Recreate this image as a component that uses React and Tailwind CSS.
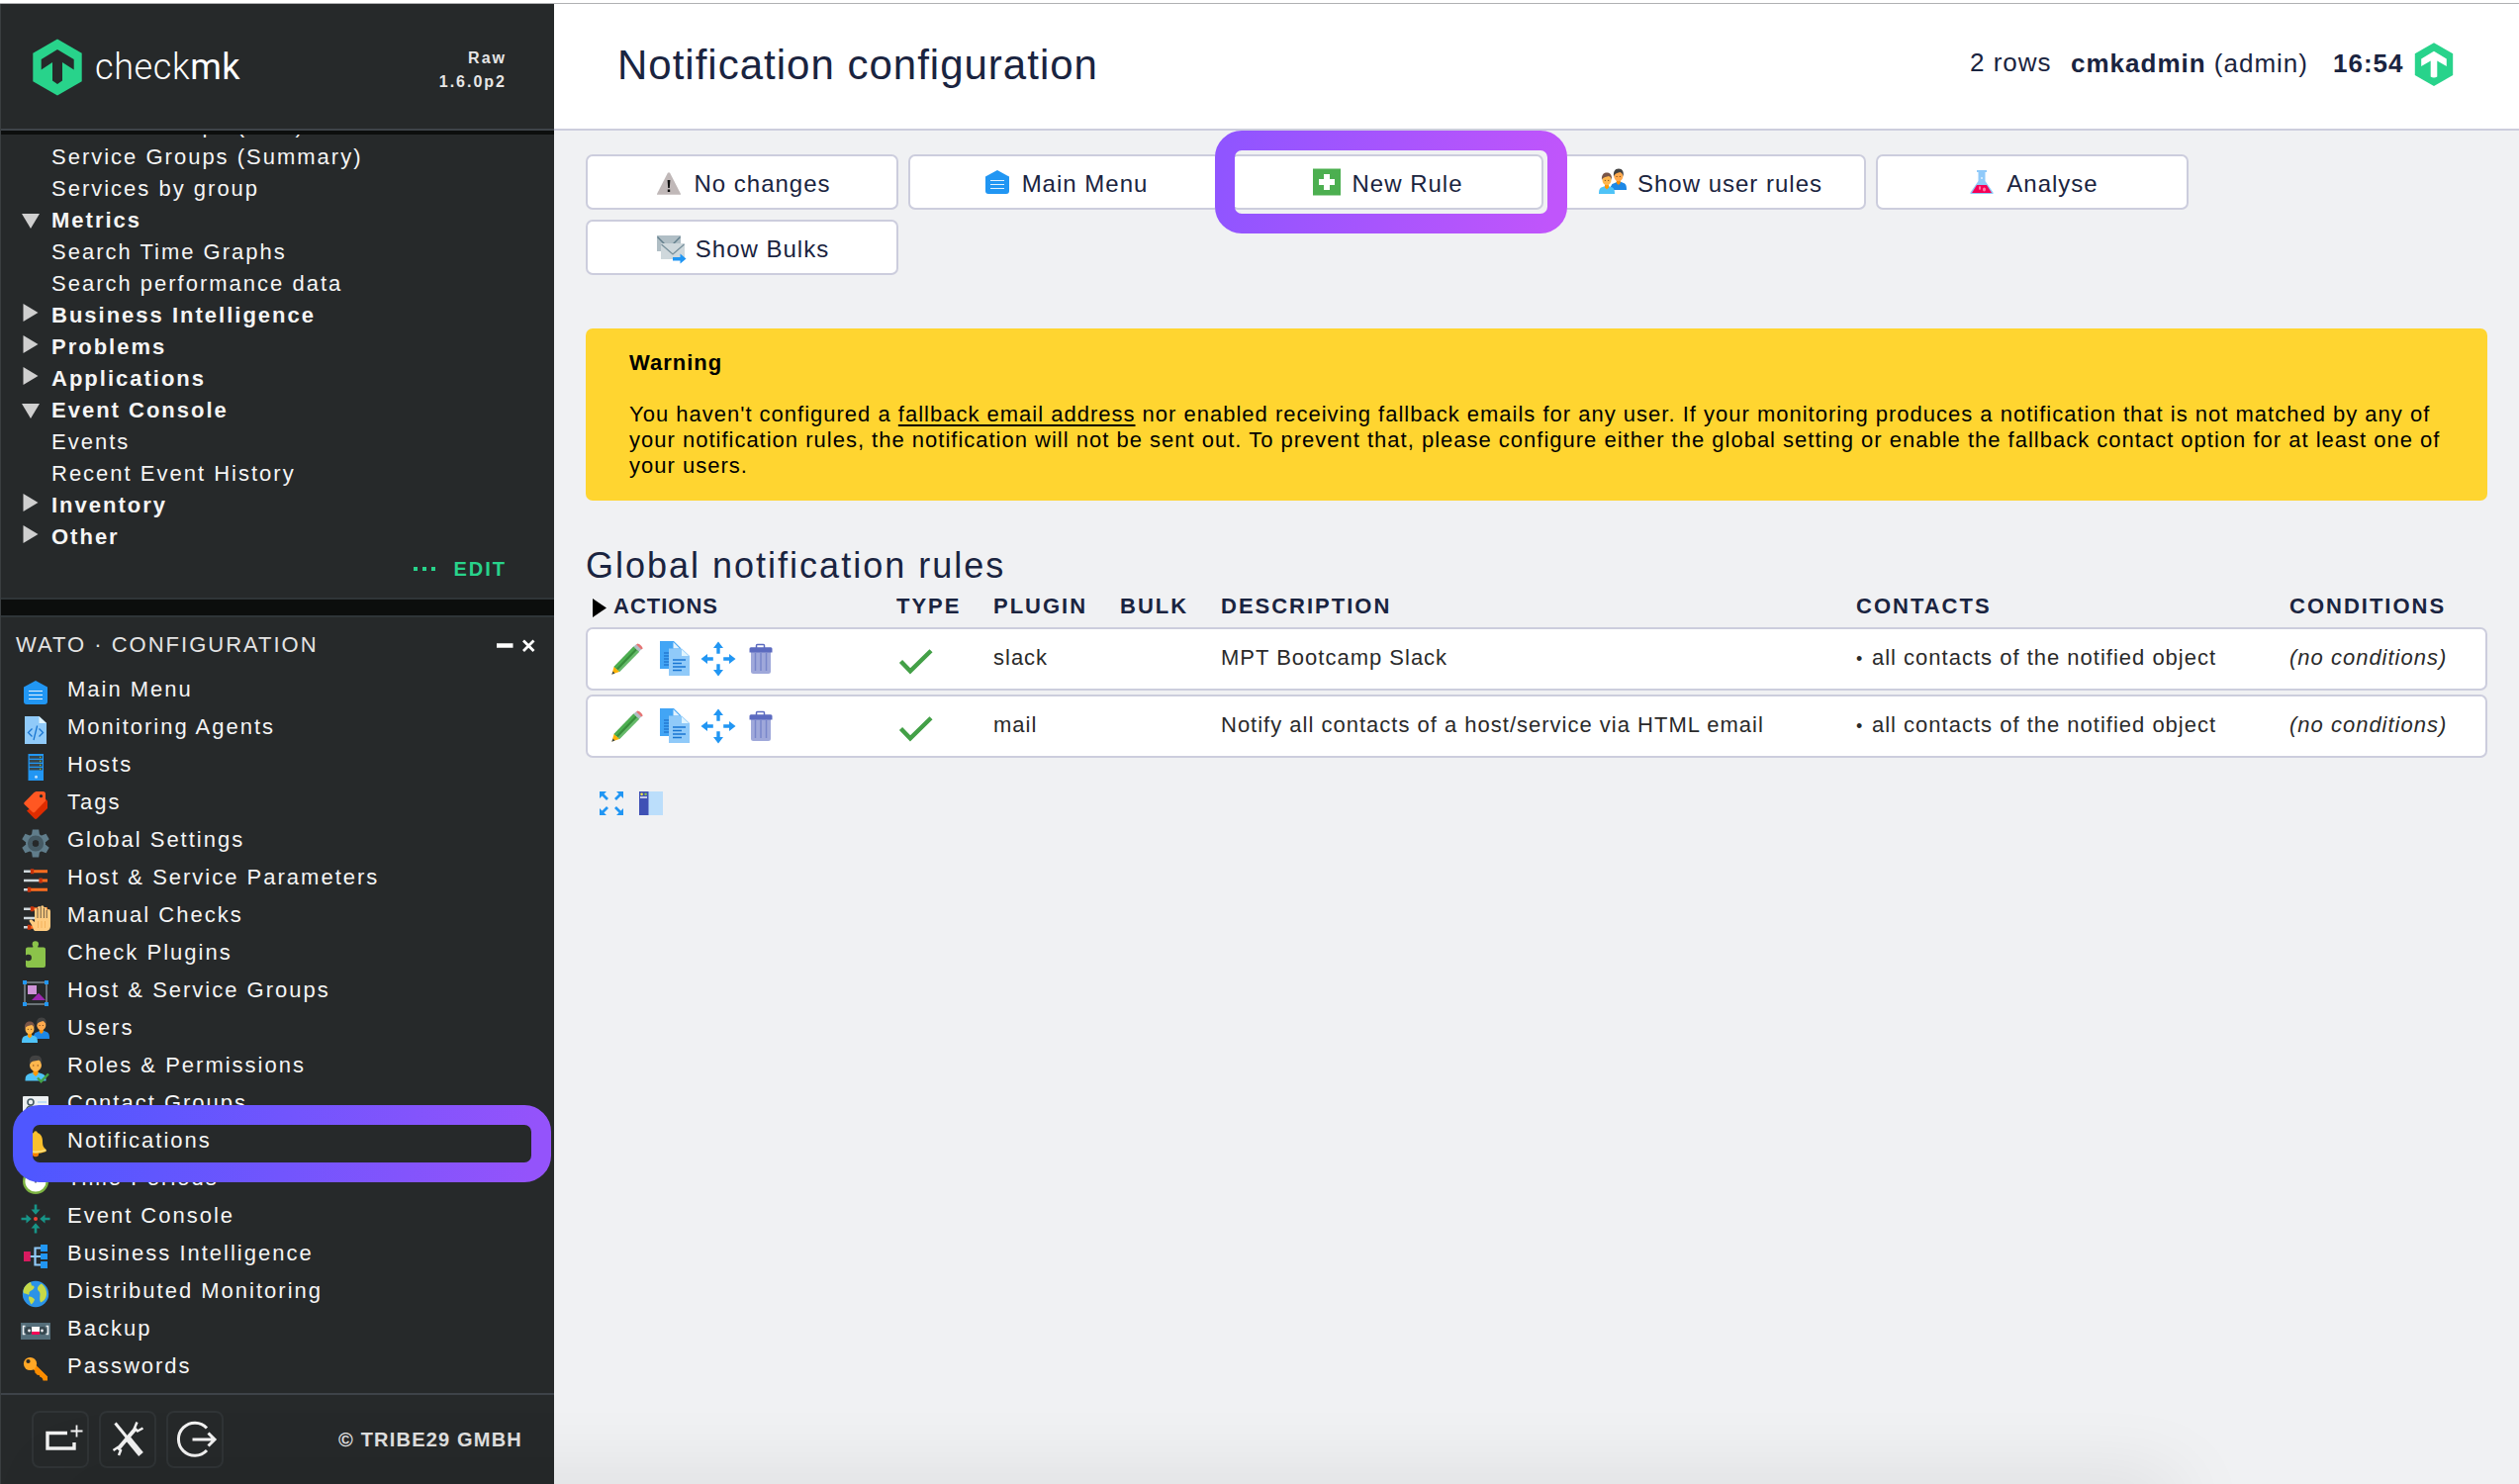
import React from "react";

/* ---------- generic icon frame ---------- */
function Icon({ children, className = "size-7" }) {
  return (
    <svg viewBox="0 0 28 28" fill="none" className={`shrink-0 overflow-visible ${className}`}>
      {children}
    </svg>
  );
}

/* ---------- sidebar / toolbar icons ---------- */
const HouseIcon = () => (
  <Icon>
    <path d="M14 2 26 8.6V23a3 3 0 0 1-3 3H5a3 3 0 0 1-3-3V8.6Z" fill="#2196f3" />
    <path d="M7 12.5H21M7 16.5H21M7 20.5H21" stroke="#e3f2fd" strokeWidth="1.2" />
  </Icon>
);
const AgentIcon = () => (
  <Icon>
    <path d="M3 0H17.5L25 7V28H3Z" fill="#90caf9" />
    <path d="M17.5 0 25 7H17.5Z" fill="#e1f5fe" />
    <path d="M10.5 12.5 6.5 16.5 10.5 20.500M17.500 12.500 21.500 16.500 17.500 20.500M15.600 9.500 12 24" stroke="#1976d2" strokeWidth="1.300" />
  </Icon>
);
const HostIcon = () => (
  <Icon>
    <path d="M6.500 0H22V27H6.500Z" fill="#2196f3" />
    <path d="M7.800 2H20.800V4.800H7.800ZM7.800 6H20.800V8.800H7.800ZM7.800 10H20.800V12.800H7.800ZM7.800 14H20.800V16.500H7.800Z" fill="#37474f" />
    <path d="M18 2.800h1.200v1.200H18ZM18 6.800h1.200v1.200H18ZM18 10.800h1.200v1.200H18ZM18 14.700h1.200v1.200H18Z" fill="#8bc34a" />
    <circle cx="14.500" cy="23.300" r="1.500" fill="#bbdefb" />
  </Icon>
);
const TagIcon = () => (
  <Icon>
    <path d="M23 6.500 26 9.500V17L15.500 27.300a2 2 0 0 1-2.800 0L5 19.500Z" fill="#dd2c00" />
    <path d="M14.500 0H21.500a2.500 2.500 0 0 1 2.500 2.500V9.500L13 21a1.500 1.500 0 0 1-2 0L2.600 13a1.500 1.500 0 0 1 0-2L12.500 1Z" fill="#ff5722" />
    <circle cx="19.500" cy="4.700" r="1.600" fill="#26292a" />
  </Icon>
);
const GearIcon = () => (
  <Icon>
    <g fill="#607d8b">
      <circle cx="14" cy="14.500" r="10" />
      <path d="M10.800 .5H17.200L18 6H10ZM10.800 28.500H17.200L18 23H10Z" />
      <path d="M10.800 .5H17.200L18 6H10ZM10.800 28.500H17.200L18 23H10Z" transform="rotate(60 14 14.500)" />
      <path d="M10.800 .5H17.200L18 6H10ZM10.800 28.500H17.200L18 23H10Z" transform="rotate(120 14 14.500)" />
    </g>
    <circle cx="14" cy="14.500" r="5.600" fill="#26292a" stroke="#455a64" strokeWidth="5" />
    <circle cx="14" cy="14.500" r="3.200" fill="#26292a" />
  </Icon>
);
const SliderLines = () => (
  <>
    <path d="M2 4.700H10M2 14H19M2 23.300H7" stroke="#cfd8dc" strokeWidth="2.400" />
    <path d="M10 4.700H26M19 14H26M7 23.300H26" stroke="#ff6d1f" strokeWidth="3" />
    <path d="M8.800 2.200h3.400v5H8.800ZM17.400 11.500h3.400v5h-3.400ZM5.800 20.800h3.400v5H5.800Z" fill="#c8330c" />
  </>
);
const ParamsIcon = () => (
  <Icon>
    <SliderLines />
  </Icon>
);
const ManualIcon = () => (
  <Icon>
    <SliderLines />
    <path d="M12 26C11 22 9.500 20 7.800 17.500c-.7-1.500 1-2.600 2.300-1.700L13 18V5.500a1.500 1.500 0 0 1 3 0V3.500a1.500 1.500 0 0 1 3.200 0V2.800a1.500 1.500 0 0 1 3.200 0V4.500a1.400 1.400 0 0 1 2.800 0V7a1.300 1.300 0 0 1 3.800 0V22c0 3-2 5-5 5H16c-2 0-3.500 0-4-1Z" fill="#ffcc80" />
    <path d="M16 4V14M19.200 3V14M22.400 4V14M25.200 6V14" stroke="#26292a" strokeWidth=".7" />
    <path d="M16.500 17V24M20 17V24M23.500 17V24" stroke="#f5b35c" strokeWidth="1" />
  </Icon>
);
const PuzzleIcon = () => (
  <Icon>
    <path d="M6 5.500h5.200c.6-1-.6-1.700-.6-3a3.200 3.200 0 0 1 6.400 0c0 1.300-1.200 2-.6 3H22a2 2 0 0 1 2 2V24a2 2 0 0 1-2 2H6a2 2 0 0 1-2-2V18.700c1 0 1.400.6 2.600.6a3.300 3.300 0 0 0 0-6.600c-1.200 0-1.600.7-2.600.7V7.500a2 2 0 0 1 2-2Z" fill="#8bc34a" />
  </Icon>
);
const GroupIcon = () => (
  <Icon>
    <rect x="3" y="3" width="22" height="22" stroke="#b0bec5" strokeWidth="1" />
    <path d="M1 1H5V5H1ZM23 1H27V5H23ZM1 23H5V27H1ZM23 23H27V27H23Z" fill="#2196f3" />
    <path d="M6 6H15V15H6Z" fill="#ce93d8" />
    <path d="M17 13.700 24 21H10Z" fill="#9c27b0" />
  </Icon>
);
const UsersIcon = () => (
  <Icon>
    <path d="M12 22V18.500a5 5 0 0 1 4-3.500l3-1.500h2.500l3.500 1.500c2 .8 3 2 3 7Z" fill="#1e88e5" />
    <path d="M17.800 11h4v4l-2 2-2-2Z" fill="#fb8c00" />
    <ellipse cx="19.800" cy="8" rx="4.600" ry="5.200" fill="#ffa94d" />
    <path d="M15 8.500C14.500 3.500 16 .5 20 .5s5.300 3 4.800 8C24 5.500 22.500 4.500 21.500 4c-2 1-5 .5-6.500 4.500Z" fill="#424242" />
    <path d="M0 26C0 21.500 1 20 3 19.300L6.500 18h3l3.500 1.300c2 .7 3 2.200 3 6.700Z" fill="#4fc3f7" />
    <path d="M6 15.500h4v4l-2 2-2-2Z" fill="#ff9800" />
    <ellipse cx="8" cy="12" rx="4.500" ry="5.200" fill="#ffb74d" />
    <path d="M3 12C2.500 7 4.500 4.500 8 4.500s5.500 2.500 5 7.500C12.500 9.500 11 8.500 10 8 8 9 4.500 8.500 3 12Z" fill="#795548" />
    <path d="M5.800 12.400h1.200M9 12.400h1.200M17.500 8.500h1.200M20.800 8.500h1.200" stroke="#784719" strokeWidth=".9" />
  </Icon>
);
const RoleIcon = () => (
  <Icon>
    <path d="M3.500 26.500C3.500 22 4.500 20.500 7 19.500L11.500 18h5l4.500 1.500c2.500 1 3.500 2.500 3.500 7Z" fill="#4fc3f7" />
    <path d="M11.500 14.500h5v5L14 22l-2.500-2.500Z" fill="#ff9800" />
    <ellipse cx="14" cy="10.500" rx="6" ry="6.500" fill="#ffb74d" />
    <path d="M8 10C7 3.500 9 .8 14 .8S21 3.500 20 10C19.500 7 18.500 6 17.500 5.500 15.500 6.500 9.500 5.500 8 10Z" fill="#424242" />
    <path d="M11 11h1.400M15.600 11H17" stroke="#784719" strokeWidth="1.200" />
    <path d="M16 23.500 19.500 27.200 27 19.500" stroke="#43a047" strokeWidth="2.400" />
  </Icon>
);
const CardIcon = () => (
  <Icon>
    <rect x="1" y="4" width="26" height="20" rx="1" fill="#eceff1" />
    <circle cx="9" cy="10" r="3" fill="#eceff1" stroke="#455a64" strokeWidth="1.600" />
    <path d="M4.500 20c0-4 2-6 4.500-6s4.500 2 4.500 6" stroke="#455a64" strokeWidth="1.500" />
    <path d="M16 10H25M16 13.500H25M16 17H25" stroke="#90caf9" strokeWidth="1.200" />
  </Icon>
);
const BellIcon = () => (
  <Icon>
    <circle cx="14" cy="24" r="3.200" fill="#f57c00" />
    <path d="M14 1.200c1.200 0 1.800.8 1.800 1.800 3.800 1.300 5.200 4.500 5.200 8.500 0 5 1 6 3.500 8.500v2c-7 2.500-14 2.500-21 0v-2c2.500-2.500 3.500-3.500 3.500-8.500 0-4 1.400-7.200 5.200-8.500 0-1 .6-1.800 1.800-1.800Z" fill="#fbc02d" />
    <path d="M3.500 20.500c7 2.300 14 2.300 21 0" stroke="#ffe082" strokeWidth="1.500" />
  </Icon>
);
const ClockIcon = () => (
  <Icon>
    <circle cx="14" cy="14" r="11.800" fill="#fff" stroke="#7cb342" strokeWidth="2.400" />
    <path d="M14 6V15.500" stroke="#37474f" strokeWidth="1.600" />
  </Icon>
);
const InArrow = ({ angle }) => (
  <path d="M12.700 -.5H15.300V4.500H18.500L14 9.800 9.500 4.500H12.700Z" fill="#179487" transform={`rotate(${angle} 14 14)`} />
);
const EventIcon = () => (
  <Icon>
    <InArrow angle={0} />
    <InArrow angle={90} />
    <InArrow angle={180} />
    <InArrow angle={270} />
    <circle cx="14" cy="14" r="2" fill="#f44336" />
  </Icon>
);
const BiIcon = () => (
  <Icon>
    <path d="M20 5.500H13.500V22.500H20M8 14H20" stroke="#90caf9" strokeWidth="2.200" />
    <path d="M2 9H8.800V19H2Z" fill="#d81b60" />
    <path d="M19 2H26V9H19ZM19 11H26V17H19ZM19 19H26V26H19Z" fill="#2196f3" />
  </Icon>
);
const GlobeIcon = () => (
  <Icon>
    <circle cx="14" cy="14" r="13.200" fill="#2b93e8" />
    <path d="M9 2C4 4 1.500 8 1.500 12c1.500 3 3 1 4.500 2.500 1 1 2-.5 1.500-2 1-2 3-2 4.500-4C13.500 7 12 5 10 5.500Z" fill="#c6d947" />
    <path d="M7 16.500c2-.5 5 1 6 3-.5 2-2 4-3.500 5C8 22 6.500 19 7 16.500Z" fill="#c6d947" />
    <path d="M20 3.500C17 5 15.500 7 16 9.500c1 2 2.500 2 2.500 4.500 0 3-1 5.500.5 8.500 3-1 4.500-3 5.500-5.500 1.500-4.500 0-10-4.500-13.500Z" fill="#c6d947" />
  </Icon>
);
const TapeIcon = () => (
  <Icon>
    <path d="M-1 5H29V22H-1Z" fill="#546e7a" />
    <path d="M3.500 8.500h-2v8h2M24.500 8.500h2v8h-2" stroke="#eceff1" strokeWidth="1.500" />
    <circle cx="7" cy="13" r="4" fill="#37474f" />
    <circle cx="21" cy="13" r="4" fill="#37474f" />
    <circle cx="7.500" cy="13" r="1.400" fill="#eceff1" />
    <circle cx="20.500" cy="13" r="1.400" fill="#eceff1" />
    <path d="M10 9H18V14H10Z" fill="#fafafa" />
    <path d="M10 14H18V17H10Z" fill="#f50057" />
  </Icon>
);
const KeyIcon = () => (
  <Icon>
    <path d="M11 10 24.500 23.500" stroke="#fb8c00" strokeWidth="5" />
    <path d="M13 17 16 20 18 19.500 18.500 22 20.800 22 21.500 25.500H26V21.500L16 12Z" fill="#fb8c00" />
    <circle cx="8.500" cy="8.500" r="6.600" fill="#ffa726" />
    <circle cx="6.500" cy="6" r="2.100" fill="#26292a" />
  </Icon>
);
const WarnIcon = () => (
  <Icon>
    <path d="M13 4.500h2L26 26v.8H2V26Z" fill="#c0b8b8" />
    <path d="M12.600 12h2.800l-.6 8h-1.600ZM12.800 21.500h2.400v2.400h-2.400Z" fill="#111" />
  </Icon>
);
const PlusIcon = () => (
  <Icon>
    <path d="M0 .5H28V27.500H0Z" fill="#4caf50" />
    <path d="M11 6H17V11H22V17H17V22H11V17H6V11H11Z" fill="#fff" />
  </Icon>
);
const FlaskIcon = () => (
  <Icon>
    <path d="M9 2H19V4H17.500V13L25.500 24.500V26H2.500V24.500L10.500 13V4H9Z" fill="#90caf9" />
    <path d="M9 17H19L24 25H4Z" fill="#f50057" />
    <ellipse cx="12" cy="20" rx="1" ry="2" fill="#ff80ab" />
    <ellipse cx="16.500" cy="21.500" rx="1.500" ry="2" fill="#ff80ab" />
    <circle cx="14" cy="10" r="1" fill="#e3f2fd" />
  </Icon>
);
const BulkIcon = () => (
  <Icon>
    <path d="M0 2H24V18H0Z" fill="#b0bec5" />
    <path d="M.5 3.500 12 15 23.500 3.500" stroke="#607d8b" strokeWidth="1.400" />
    <path d="M4 10H28V26H4Z" fill="#cfd8dc" />
    <path d="M4.500 11 16 21 27.500 11" stroke="#78909c" strokeWidth="1.300" />
    <path d="M16 24H23.500V20.500L29.500 25.500 23.500 30.500V27.500H16Z" fill="#2196f3" />
  </Icon>
);

/* ---------- table icons ---------- */
const PencilIcon = () => (
  <svg viewBox="0 0 32 32" className="size-8 shrink-0">
    <path d="M22.500 3.500 28 8.700 8 29 2.500 24Z" fill="#388e3c" />
    <path d="M22.500 3.500 24.500 5.500 4.600 26 2.500 24Z" fill="#4caf50" />
    <path d="M26 7 28 8.700 8 29 6.300 27.500Z" fill="#66bb6a" />
    <path d="M2.500 24 8 29 .5 31.500Z" fill="#ffb300" />
    <path d="M1.500 28.500 3.500 30.500 .3 31.700Z" fill="#37474f" />
    <path d="M22.500 3.500 25 1.200 30.300 6.300 28 8.700Z" fill="#b0bec5" />
    <path d="M25 1.500 26.500.4c1.500 0 5 3 5.200 5L30.200 6.500Z" fill="#e57373" />
  </svg>
);
const CopyIcon = () => (
  <svg viewBox="0 0 30 36" className="h-9 w-[30px] shrink-0">
    <path d="M0 0H14L21 7V28H0Z" fill="#42a5f5" />
    <path d="M13.500 1 20 7.500H13.500Z" fill="#e3f2fd" />
    <path d="M4 12H10M4 15H10M4 18H10M4 21H10M4 24H10" stroke="#1565c0" strokeWidth="1.200" />
    <path d="M9 7.500H22L30 15V35H9Z" fill="#90caf9" />
    <path d="M22 8.500 29 15H22Z" fill="#e1f5fe" />
    <path d="M13 19H26M13 22.500H22M13 26H26M13 29.500H22" stroke="#1976d2" strokeWidth="1.400" />
  </svg>
);
const OutArrow = ({ angle }) => (
  <path d="M18 .5 23 7H19.700V12.800H16.300V7H13Z" fill="#2196f3" transform={`rotate(${angle} 18 18)`} />
);
const MoveIcon = () => (
  <svg viewBox="0 0 36 36" className="size-9 shrink-0">
    <OutArrow angle={0} />
    <OutArrow angle={90} />
    <OutArrow angle={180} />
    <OutArrow angle={270} />
  </svg>
);
const TrashIcon = () => (
  <svg viewBox="0 0 24 32" className="h-8 w-6 shrink-0" fill="none">
    <path d="M7.500 5V2.500a1 1 0 0 1 1-1h6a1 1 0 0 1 1 1V5" stroke="#5c6bc0" strokeWidth="1.500" />
    <path d="M2 9H22V28.500a2.500 2.500 0 0 1-2.500 2.500h-15A2.500 2.500 0 0 1 2 28.500Z" fill="#9fa8da" />
    <path d="M6.500 10V28M12 10V28M17.500 10V28" stroke="#7986cb" strokeWidth="1.500" />
    <path d="M2 4.200H22a1.500 1.500 0 0 1 1.500 1.500V9.500H.5V5.700A1.500 1.500 0 0 1 2 4.200Z" fill="#5c6bc0" />
  </svg>
);
const CheckIcon = () => (
  <svg viewBox="0 0 36 26" className="h-[26px] w-9" fill="none">
    <path d="M2.500 12.500 12 22.300 33 1.800" stroke="#43a047" strokeWidth="4.400" />
  </svg>
);

/* ---------- brand mark ---------- */
function Brand({ className, inner }) {
  return (
    <svg viewBox="0 0 50 58" className={className}>
      <path d="M25 .5 49.700 14.800V43.200L25 57.500.3 43.200V14.800Z" fill="#28d38b" />
      <path d="M25 11 41.700 21V31.500L30 24V42.500L25 46 20 42.500V24L8.700 31.500V21Z" fill={inner} />
    </svg>
  );
}
function HeaderMark() {
  return (
    <svg viewBox="0 0 40 44" className="h-11 w-10">
      <path d="M20 .3 39.200 11.300V33L20 44 .8 33V11.300Z" fill="#28d38b" />
      <path d="M20 8.700 32.800 16.500V24L23.300 18.500V34.500q-3.300 2.200-6.600 0V18.500L7.200 24V16.500Z" fill="#fff" />
    </svg>
  );
}

/* ---------- data ---------- */
const VIEWS = [
  ["item", "Service Groups (Grid)"],
  ["item", "Service Groups (Summary)"],
  ["item", "Services by group"],
  ["open", "Metrics"],
  ["item", "Search Time Graphs"],
  ["item", "Search performance data"],
  ["closed", "Business Intelligence"],
  ["closed", "Problems"],
  ["closed", "Applications"],
  ["open", "Event Console"],
  ["item", "Events"],
  ["item", "Recent Event History"],
  ["closed", "Inventory"],
  ["closed", "Other"],
];

const WATO = [
  [HouseIcon, "Main Menu"],
  [AgentIcon, "Monitoring Agents"],
  [HostIcon, "Hosts"],
  [TagIcon, "Tags"],
  [GearIcon, "Global Settings"],
  [ParamsIcon, "Host & Service Parameters"],
  [ManualIcon, "Manual Checks"],
  [PuzzleIcon, "Check Plugins"],
  [GroupIcon, "Host & Service Groups"],
  [UsersIcon, "Users"],
  [RoleIcon, "Roles & Permissions"],
  [CardIcon, "Contact Groups"],
  [BellIcon, "Notifications"],
  [ClockIcon, "Time Periods"],
  [EventIcon, "Event Console"],
  [BiIcon, "Business Intelligence"],
  [GlobeIcon, "Distributed Monitoring"],
  [TapeIcon, "Backup"],
  [KeyIcon, "Passwords"],
];

const BUTTONS = [
  [WarnIcon, "No changes"],
  [HouseIcon, "Main Menu"],
  [PlusIcon, "New Rule"],
  [UsersIcon, "Show user rules"],
  [FlaskIcon, "Analyse"],
  [BulkIcon, "Show Bulks"],
];

const RULES = [
  ["slack", "MPT Bootcamp Slack"],
  ["mail", "Notify all contacts of a host/service via HTML email"],
];

/* ---------- sidebar ---------- */
function ViewRow({ kind, label }) {
  return (
    <li className="flex h-8 text-[22px] leading-8 tracking-[2px] text-[#f5f5f5]">
      <span className="flex w-[51px] pl-[22px]">
        {kind === "closed" && (
          <svg viewBox="0 0 16 18" className="mt-1 h-[18px] w-4">
            <path d="M.5 0 15.500 9 .5 18Z" fill="#cfcfcf" />
          </svg>
        )}
        {kind === "open" && (
          <svg viewBox="0 0 18 15" className="-ml-[1px] mt-[9px] h-[15px] w-[18px]">
            <path d="M0 0H18L9 15Z" fill="#cfcfcf" />
          </svg>
        )}
      </span>
      <span className={kind === "item" ? "" : "font-bold"}>{label}</span>
    </li>
  );
}

function FooterButton({ children }) {
  return (
    <div className="size-[58px] rounded-lg border-2 border-[#303436]">
      <svg viewBox="0 0 54 54" fill="none" stroke="#f2f2f2" className="size-[54px]">
        {children}
      </svg>
    </div>
  );
}

function Sidebar() {
  return (
    <aside className="flex w-[560px] shrink-0 flex-col border-l border-[#3a3e40] bg-[#26292a]">
      <div className="flex h-[128px] justify-between border-b-2 border-[#3e4349] pr-12 pl-8">
        <div className="flex pt-[35px]">
          <Brand className="h-[58px] w-[50px]" inner="#26292a" />
          <div className="ml-[13px] pt-2 font-['Roboto'] text-[36px] leading-[42px] font-light tracking-[0.600px] text-white">
            check<span className="font-normal">mk</span>
          </div>
        </div>
        <div className="pt-[43px] text-right text-[16px] leading-6 font-bold tracking-[2px] text-[#e6e6e6]">
          <div>Raw</div>
          <div>1.6.0p2</div>
        </div>
      </div>
      <div className="h-1 bg-[#0c0e0d]" />

      <div className="h-[468px] overflow-hidden">
        <ul className="-mt-[25px]">
          {VIEWS.map(([kind, label]) => (
            <ViewRow key={label} kind={kind} label={label} />
          ))}
        </ul>
        <div className="flex items-center justify-end pt-[1px] pr-12 text-[20px] leading-[30px] font-bold tracking-[2px] text-[#28d38b]">
          <span className="mr-[18px] flex gap-[5px]">
            <i className="size-1 bg-[#28d38b]" />
            <i className="size-1 bg-[#28d38b]" />
            <i className="size-1 bg-[#28d38b]" />
          </span>
          EDIT
        </div>
      </div>
      <div className="h-5 border-y-2 border-[#2f3538] bg-[#0c0e0d]" />

      <div className="flex h-[57px] items-start pt-[15px] pl-[15px] text-[22px] leading-[25px] tracking-[2px] text-[#e4e4e4]">
        <span className="flex-1">WATO · CONFIGURATION</span>
        <svg viewBox="0 0 40 14" stroke="#fff" fill="none" className="mt-[7px] mr-[18px] h-[14px] w-10">
          <path d="M0 6.500H16.500" strokeWidth="4.500" />
          <path d="M27 1.500 37.500 12M37.500 1.500 27 12" strokeWidth="2.800" />
        </svg>
      </div>

      <ul className="h-[727px]">
        {WATO.map(([Glyph, label]) => (
          <li key={label} className="flex h-[38px] pl-[21px] text-[22px] leading-[31px] tracking-[2px] text-[#f5f5f5]">
            <span className="mt-[5px] mr-[18px] size-7">
              <Glyph />
            </span>
            {label}
          </li>
        ))}
      </ul>

      <div className="flex flex-1 border-t-2 border-[#3e4349] pt-4 pl-[31px]">
        <div className="flex gap-[10px]">
          <FooterButton>
            <path d="M34 20.500H14V36H41V30" strokeWidth="3.400" />
            <path d="M43.500 12.500V24.500M37.500 18.500H49.500" strokeWidth="1.800" />
          </FooterButton>
          <FooterButton>
            <path d="M14.500 10.500 28 27" strokeWidth="3" />
            <path d="M26.500 25 40.500 42" strokeWidth="6" />
            <path d="M35 16 17 37" strokeWidth="4" />
            <path d="M36.500 9.500 34 15.500 37 18.500 42.500 15.500M12.500 38 17 35 20 38 18 43" strokeWidth="2.500" />
          </FooterButton>
          <FooterButton>
            <path d="M39 15.500A16.500 16.500 0 1 0 39 38" strokeWidth="3" />
            <path d="M24.500 27H47M40.500 20.500 47 27 40.500 33.500" strokeWidth="3" />
          </FooterButton>
        </div>
        <div className="ml-[116px] pt-4 text-[20px] leading-[26px] font-bold tracking-[1.200px] text-[#e0e0e0]">© TRIBE29 GMBH</div>
      </div>
    </aside>
  );
}

/* ---------- main area ---------- */
function Header() {
  return (
    <header className="flex h-[128px] justify-between border-b-2 border-[#cccddd] bg-white pr-[66px] pl-16 text-[#1a2440]">
      <h1 className="pt-[38px] text-[42px] leading-[48px] tracking-[1px]">Notification configuration</h1>
      <div className="flex items-start text-[26px] leading-[30px] tracking-[1px] whitespace-nowrap">
        <span className="mt-[44px] w-[102px]">2 rows</span>
        <span className="mt-[45px] w-[265px]">
          <b>cmkadmin</b> (admin)
        </span>
        <b className="mt-[45px] w-[82px]">16:54</b>
        <span className="mt-[39px]">
          <HeaderMark />
        </span>
      </div>
    </header>
  );
}

function Rule({ plugin, description }) {
  return (
    <div className="grid h-16 grid-cols-[312px_98px_128px_102px_642px_438px_1fr] rounded-[7px] border-2 border-[#cccddd] bg-white pt-4 text-[22px] leading-[26px] tracking-[1px] whitespace-nowrap text-[#2a2a2a]">
      <div className="-mt-1 flex h-9 items-center pl-6">
        <PencilIcon />
        <span className="ml-[17px]"><CopyIcon /></span>
        <span className="ml-[11px]"><MoveIcon /></span>
        <span className="ml-[13px]"><TrashIcon /></span>
      </div>
      <div className="pt-1 pl-[2px]">
        <CheckIcon />
      </div>
      <div>{plugin}</div>
      <div />
      <div>{description}</div>
      <div><span className="mr-[8px] inline-block w-[8px] text-[18px]">•</span>all contacts of the notified object</div>
      <div className="italic">(no conditions)</div>
    </div>
  );
}

function Main() {
  return (
    <main className="flex-1">
      <Header />
      <div className="px-8 pt-6">
        <div className="flex flex-wrap gap-[10px]">
          {BUTTONS.map(([Glyph, label]) => (
            <button
              key={label}
              className="flex h-14 w-[316px] items-center justify-center gap-[11px] rounded-[7px] border-2 border-[#cccddd] bg-white pl-[2px] text-[24px] leading-[27px] tracking-[1px] text-[#1a2440]"
            >
              <Glyph />
              <span className="pt-[3px]">{label}</span>
            </button>
          ))}
        </div>

        <section className="mt-[54px] h-[174px] rounded-[7px] bg-[#ffd530] pt-[22px] pl-11 text-[22px] leading-[26px] tracking-[1px] whitespace-nowrap text-black">
          <b>Warning</b>
          <p className="mt-[26px]">
            You haven't configured a{" "}
            <a className="underline decoration-2 underline-offset-[3px] [text-decoration-skip-ink:none]">fallback email address</a> nor enabled
            receiving fallback emails for any user. If your monitoring produces a notification that is not matched by any of
            <br />
            your notification rules, the notification will not be sent out. To prevent that, please configure either the global
            setting or enable the fallback contact option for at least one of
            <br />
            your users.
          </p>
        </section>

        <h2 className="mt-[45px] text-[36px] leading-[42px] tracking-[2px] text-[#1a2440]">Global notification rules</h2>
        <div className="grid h-[41px] grid-cols-[314px_98px_128px_102px_642px_438px_1fr] pt-[7px] text-[22px] leading-[26px] font-bold tracking-[2px] text-[#1a2440]">
          <span className="flex tracking-[1px]">
            <svg viewBox="0 0 28 26" className="h-[26px] w-7">
              <path d="M7 5 21 14.500 7 24Z" fill="#000" />
            </svg>
            ACTIONS
          </span>
          <span>TYPE</span>
          <span>PLUGIN</span>
          <span>BULK</span>
          <span>DESCRIPTION</span>
          <span>CONTACTS</span>
          <span>CONDITIONS</span>
        </div>
        <div className="flex flex-col gap-1">
          {RULES.map(([plugin, description]) => (
            <Rule key={plugin} plugin={plugin} description={description} />
          ))}
        </div>

        <div className="mt-[34px] flex gap-4 pl-[14px]">
          <svg viewBox="0 0 24 24" className="size-6" stroke="#2196f3" strokeWidth="2.800">
            <path d="M0 0H7L0 7ZM24 0H17L24 7ZM0 24H7L0 17ZM24 24H17L24 17Z" fill="#2196f3" stroke="none" />
            <path d="M2 2 8 8M22 2 16 8M2 22 8 16M22 22 16 16" />
          </svg>
          <svg viewBox="0 0 24 24" className="size-6">
            <path d="M0 0H24V24H0Z" fill="#bbdefb" />
            <path d="M0 0H9.500V24H0Z" fill="#3f51b5" />
            <path d="M1 5H8V7H1Z" fill="#c5cae9" />
            <circle cx="2.600" cy="2.700" r="1.300" fill="#ffeb3b" />
            <circle cx="6.600" cy="2.700" r="1.300" fill="#8bc34a" />
          </svg>
        </div>
      </div>
    </main>
  );
}

/* ---------- highlight rings laid over the page ---------- */
function Rings() {
  return (
    <>
      <svg viewBox="0 0 544 78" fill="none" className="absolute top-[1117px] left-[13px] h-[78px] w-[544px]">
        <linearGradient id="ringSide" gradientUnits="userSpaceOnUse" x1="30" y1="0" x2="520" y2="78">
          <stop offset="0" stopColor="#4f57ff" />
          <stop offset="1" stopColor="#9453fb" />
        </linearGradient>
        <rect x="10" y="10" width="524" height="58" rx="17" stroke="url(#ringSide)" strokeWidth="20" />
      </svg>
      <svg viewBox="0 0 356 104" fill="none" className="absolute top-[132px] left-[1228px] h-[104px] w-[356px]">
        <linearGradient id="ringTop" gradientUnits="userSpaceOnUse" x1="10" y1="20" x2="340" y2="90">
          <stop offset="0" stopColor="#9055ff" />
          <stop offset="1" stopColor="#c055fb" />
        </linearGradient>
        <rect x="10" y="10" width="336" height="84" rx="17" stroke="url(#ringTop)" strokeWidth="20" />
      </svg>
    </>
  );
}

export default function App() {
  return (
    <div className="relative flex h-[1500px] w-[2546px] flex-col overflow-hidden bg-[#f0f1f3] font-['Liberation_Sans',Arial,sans-serif]">
      <div className="h-1 shrink-0 border-b border-[#b0b1b3] bg-white" />
      <div className="flex min-h-0 flex-1">
        <Sidebar />
        <Main />
      </div>
      <Rings />
      <div className="pointer-events-none absolute top-[1500px] right-[346px] left-[60px] h-10 shadow-[0_0_80px_rgba(0,0,0,0.13)]" />
    </div>
  );
}
